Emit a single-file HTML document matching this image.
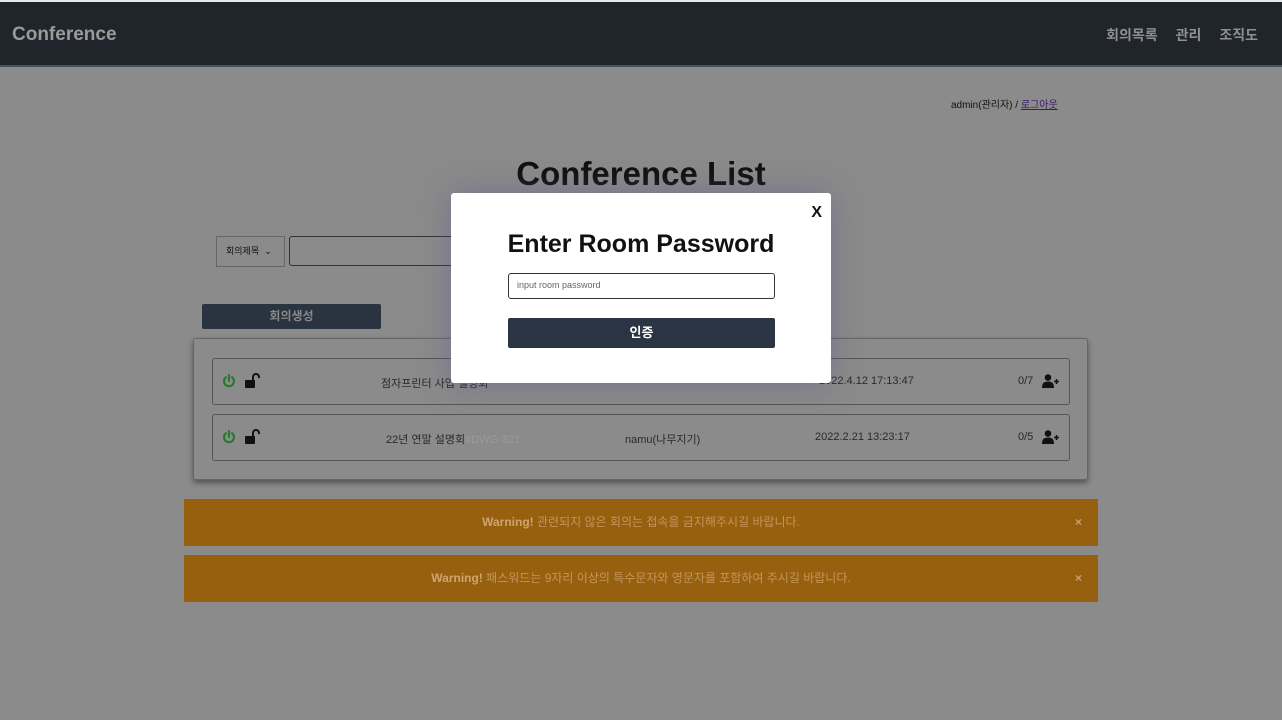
<!DOCTYPE html>
<html><head><meta charset="utf-8"><style>
*{box-sizing:border-box;margin:0;padding:0}
body{width:1282px;height:720px;background:#8b8b8b;font-family:"Liberation Sans","Noto Sans CJK KR",sans-serif;position:relative;overflow:hidden}
.nav{position:absolute;left:0;top:0;width:1282px;height:67px;background:#20252b;border-top:2px solid #e8e8e8;border-bottom:2px solid #4a525c}
.nav .brand{position:absolute;left:12px;top:22px;color:#9a9a9a;font-size:19px;font-weight:bold}
.nav .links{position:absolute;right:24px;top:23px;color:#8f8f8f;font-size:14px;font-weight:bold}
.nav .links span{margin-left:18px}
.abs{position:absolute}
.row{position:absolute;left:212px;width:858px;height:47px;border:1px solid #555;border-radius:3px;font-size:11px;color:#2a2a2a}
.row span{position:absolute;top:16px}
.row svg{position:absolute}
.alert{position:absolute;left:184px;width:914px;height:47px;background:#97600f;color:#c4955c;font-size:12px;text-align:center;line-height:47px}
.alert b{color:#d0a470}
.alert .x{position:absolute;right:16px;top:0;font-weight:bold;color:#c8a070}
</style></head><body>
<div class="nav"><div class="brand">Conference</div><div class="links"><span>회의목록</span><span>관리</span><span>조직도</span></div></div>
<div class="abs" style="left:951px;top:96px;font-size:10px;color:#111">admin(관리자) / <span style="color:#3a1a6a;text-decoration:underline">로그아웃</span></div>
<div class="abs" style="left:0;width:1282px;top:155px;text-align:center;font-size:33px;font-weight:bold;color:#111">Conference List</div>
<div class="abs" style="left:216px;top:236px;width:69px;height:31px;border:1px solid #666;font-size:9px;line-height:29px;padding-left:9px;color:#111">회의제목 &nbsp;⌄</div>
<div class="abs" style="left:289px;top:236px;width:200px;height:30px;border:1px solid #333;border-radius:3px"></div>
<div class="abs" style="left:202px;top:304px;width:179px;height:25px;background:#2a3340;border-radius:2px;color:#888;font-size:12px;font-weight:bold;text-align:center;line-height:25px">회의생성</div>
<div class="abs" style="left:193px;top:338px;width:895px;height:142px;border:1px solid #666;border-radius:3px;box-shadow:0 3px 6px rgba(0,0,0,.4)"></div>

<div class="row" style="top:358px">
<svg style="left:9px;top:15px" width="14" height="14" viewBox="0 0 14 14"><path d="M7 1v6M4 3.2A5 5 0 1 0 10 3.2" fill="none" stroke="#1f7a2a" stroke-width="2" stroke-linecap="round"/></svg>
<svg style="left:31px;top:14px" width="16" height="15" viewBox="0 0 16 15"><path d="M9 7V4a3 3 0 0 1 6 0v1" fill="none" stroke="#111" stroke-width="2"/><rect x="1" y="7" width="10" height="8" rx="1" fill="#111"/></svg>
<span style="left:168px">점자프린터 사업 설명회</span><span style="left:606px">2022.4.12 17:13:47</span><span style="left:805px">0/7</span>
<svg style="left:829px;top:15px" width="18" height="14" viewBox="0 0 18 14"><circle cx="6" cy="3.5" r="3.3" fill="#111"/><path d="M0 14c0-5 2-6.5 6-6.5s6 1.5 6 6.5z" fill="#111"/><path d="M14.5 5v5M12 7.5h5" stroke="#111" stroke-width="1.6"/></svg></div>
<div class="row" style="top:414px">
<svg style="left:9px;top:15px" width="14" height="14" viewBox="0 0 14 14"><path d="M7 1v6M4 3.2A5 5 0 1 0 10 3.2" fill="none" stroke="#1f7a2a" stroke-width="2" stroke-linecap="round"/></svg>
<svg style="left:31px;top:14px" width="16" height="15" viewBox="0 0 16 15"><path d="M9 7V4a3 3 0 0 1 6 0v1" fill="none" stroke="#111" stroke-width="2"/><rect x="1" y="7" width="10" height="8" rx="1" fill="#111"/></svg>
<span style="left:173px">22년 연말 설명회<span style="position:static;color:#9a9a9a">#DWG-321</span></span><span style="left:412px">namu(나무지기)</span><span style="left:602px">2022.2.21 13:23:17</span><span style="left:805px">0/5</span>
<svg style="left:829px;top:15px" width="18" height="14" viewBox="0 0 18 14"><circle cx="6" cy="3.5" r="3.3" fill="#111"/><path d="M0 14c0-5 2-6.5 6-6.5s6 1.5 6 6.5z" fill="#111"/><path d="M14.5 5v5M12 7.5h5" stroke="#111" stroke-width="1.6"/></svg></div>
<div class="alert" style="top:499px"><b>Warning!</b> 관련되지 않은 회의는 접속을 금지해주시길 바랍니다.<span class="x">×</span></div>
<div class="alert" style="top:555px"><b>Warning!</b> 패스워드는 9자리 이상의 특수문자와 영문자를 포함하여 주시길 바랍니다.<span class="x">×</span></div>
<div class="abs" style="left:451px;top:193px;width:380px;height:190px;background:#fff;border-radius:3px;box-shadow:0 0 30px rgba(90,90,140,.5)">
<div class="abs" style="right:9px;top:11px;font-size:16px;font-weight:bold;color:#111">X</div>
<div class="abs" style="left:0;width:380px;top:37px;text-align:center;font-size:25px;font-weight:bold;color:#111">Enter Room Password</div>
<div class="abs" style="left:57px;top:80px;width:267px;height:26px;border:1.5px solid #333;border-radius:3px;font-size:9px;color:#666;padding:6px 8px">input room password</div>
<div class="abs" style="left:57px;top:125px;width:267px;height:30px;background:#2a3442;border-radius:2px;color:#fff;font-size:13px;font-weight:bold;text-align:center;line-height:30px">인증</div>
</div>
</body></html>
